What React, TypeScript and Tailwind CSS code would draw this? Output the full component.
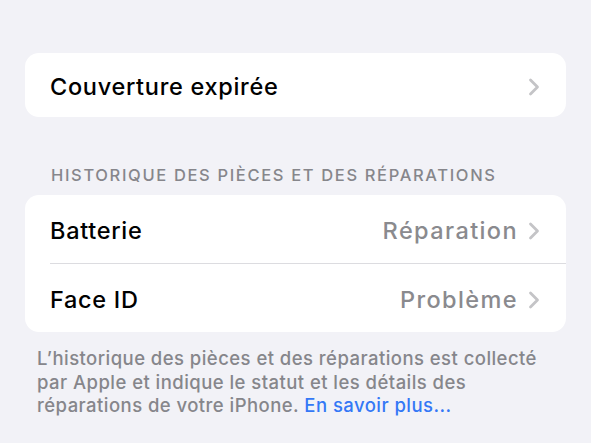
const Chevron = () => (
  <svg width="12" height="18" viewBox="0 0 12 18" fill="none" className="shrink-0">
    <path d="M2.5 2 L9.5 9 L2.5 16" stroke="#c4c4c7" strokeWidth="2.8" strokeLinecap="round" strokeLinejoin="round" />
  </svg>
);

function Row({ label, value, divider, h }: { label: string; value?: string; divider?: boolean; h: string }) {
  return (
    <div className={`flex ${h} items-center pl-[25px]`}>
      <div className={`flex h-full flex-1 items-center pr-[26px] pt-[3px] ${divider ? "border-b border-[#dcdce0]" : ""}`}>
        <span className="flex-1 text-[23.5px] font-medium tracking-[0.7px] text-black">{label}</span>
        {value && <span className="mr-[10px] text-[23.5px] font-medium tracking-[1.4px] text-[#8a8a8e]">{value}</span>}
        <Chevron />
      </div>
    </div>
  );
}

export default function App() {
  return (
    <div className="min-h-screen bg-[#f2f2f7] pt-[53px] font-['Inter',sans-serif]">
      <div className="mx-[25px] w-[541px]">
        <div className="overflow-hidden rounded-[14px] bg-white">
          <Row label="Couverture expirée" h="h-[64px]" />
        </div>

        <div className="h-[78px] pl-[26px] pt-[48px] text-[16.5px] font-medium leading-[20px] tracking-[1.65px] text-[#86868b]">
          HISTORIQUE DES PIÈCES ET DES RÉPARATIONS
        </div>

        <div className="overflow-hidden rounded-[14px] bg-white">
          <Row label="Batterie" value="Réparation" divider h="h-[69px]" />
          <Row label="Face ID" value="Problème" h="h-[68px]" />
        </div>

        <p className="pl-[12px] pt-[15px] text-[18.5px] font-medium leading-[23.5px] tracking-[0.45px] text-[#86868b]">
          L’historique des pièces et des réparations est collecté
          <br />
          par Apple et indique le statut et les détails des
          <br />
          réparations de votre iPhone. <span className="text-[#3478f6]">En savoir plus...</span>
        </p>
      </div>
    </div>
  );
}
